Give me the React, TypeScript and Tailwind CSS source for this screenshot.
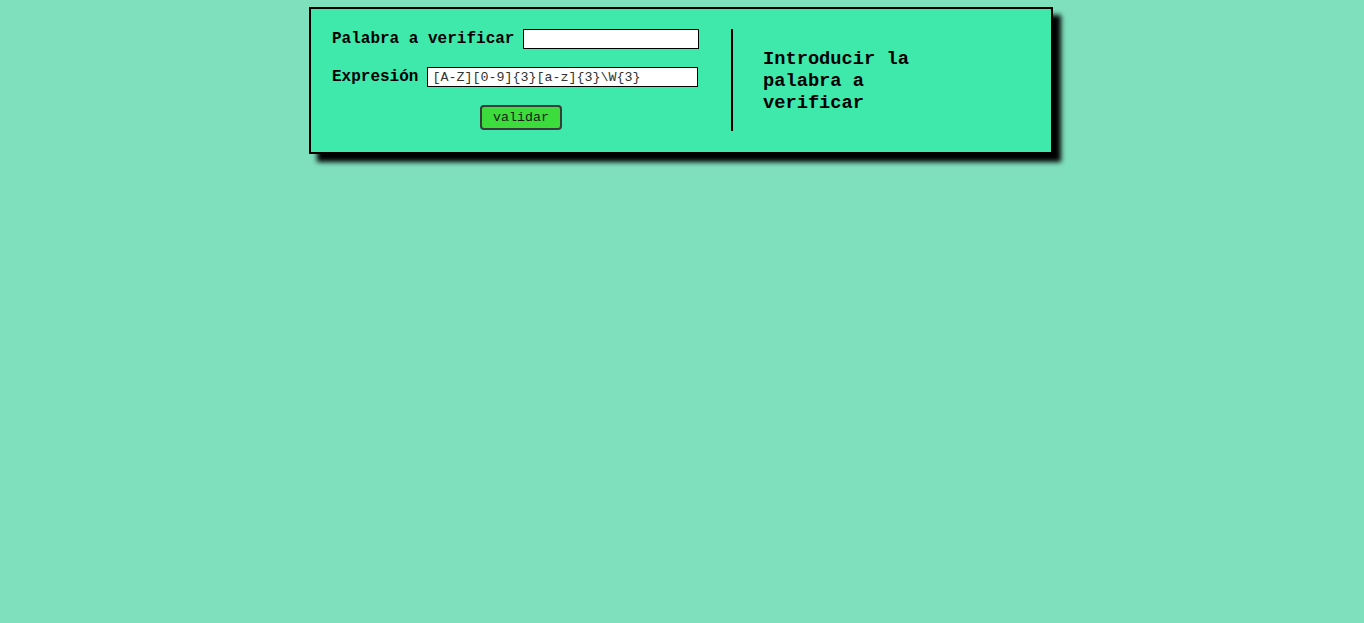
import { useState } from 'react';

export default function App() {
  const [palabra, setPalabra] = useState('');
  const [expresion, setExpresion] = useState('[A-Z][0-9]{3}[a-z]{3}\\W{3}');

  const mono = "font-['Liberation_Mono','Courier_New',monospace]";
  const input = `h-[20px] border border-black bg-white px-[4px] text-[13.33px] text-[#333] outline-none ${mono}`;

  return (
    <div className={`min-h-screen bg-[#7fe0be] pr-[2px] pt-[7px] ${mono}`}>
      <div className="mx-auto flex w-[744px] border-2 border-black bg-[#3fe8ab] pb-[21px] pl-[21px] pt-[20px] shadow-[8px_8px_5px_#000]">
        <div className="flex w-[378px] flex-col gap-[18px]">
          <div className="flex items-center">
            <label className="text-[16px] font-bold leading-[18px] text-black">Palabra a verificar</label>
            <input
              className={`${input} ml-[9px] w-[176px]`}
              value={palabra}
              onChange={(e) => setPalabra(e.target.value)}
            />
          </div>
          <div className="flex items-center">
            <label className="text-[16px] font-bold leading-[18px] text-black">Expresión</label>
            <input
              className={`${input} ml-[9px] w-[271px]`}
              value={expresion}
              onChange={(e) => setExpresion(e.target.value)}
            />
          </div>
          <div className="flex justify-center">
            <button className="h-[25px] w-[82px] rounded-[4px] border-2 border-[#3a3a3a] bg-[#3cdc3c] text-[13.33px] text-[#1a1a1a]">
              validar
            </button>
          </div>
        </div>
        <div className="ml-[21px] flex items-center">
          <div className="h-[102px] w-[2px] bg-black" />
          <h3 className="ml-[30px] mt-[2px] w-[180px] text-[18.72px] font-bold leading-[22px] text-black">
            Introducir la palabra a verificar
          </h3>
        </div>
      </div>
    </div>
  );
}
